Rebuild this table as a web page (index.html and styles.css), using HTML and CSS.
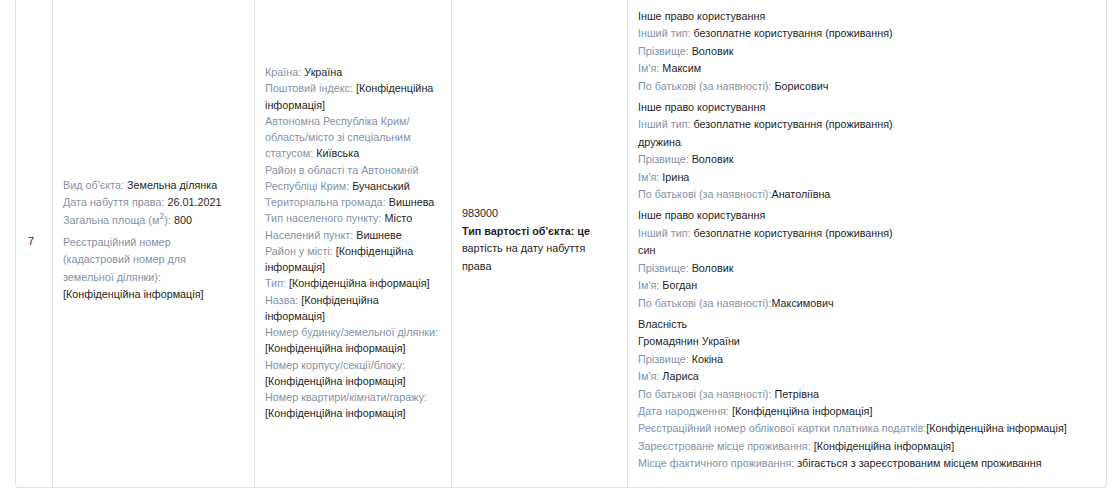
FILE: index.html
```html
<!DOCTYPE html>
<html lang="uk">
<head>
<meta charset="utf-8">
<title>Об'єкт</title>
<link rel="stylesheet" href="styles.css">
</head>
<body>
<div class="tbl">
  <div class="cell mid num">7</div>

  <div class="cell mid c2">
    <div class="grp">
      <div><span class="lbl">Вид об'єкта:</span> Земельна ділянка</div>
      <div><span class="lbl">Дата набуття права:</span> 26.01.2021</div>
      <div><span class="lbl">Загальна площа (м<sup>2</sup>):</span> 800</div>
    </div>
    <div class="grp">
      <div class="lbl narrow">Реєстраційний номер (кадастровий номер для земельної ділянки):</div>
      <div>[Конфіденційна інформація]</div>
    </div>
  </div>

  <div class="cell mid c3">
    <div><span class="lbl">Країна:</span> Україна</div>
    <div><span class="lbl">Поштовий індекс:</span> [Конфіденційна інформація]</div>
    <div><span class="lbl">Автономна Республіка Крим/ область/місто зі спеціальним статусом:</span> Київська</div>
    <div><span class="lbl">Район в області та Автономній Республіці Крим:</span> Бучанський</div>
    <div><span class="lbl">Територіальна громада:</span> Вишнева</div>
    <div><span class="lbl">Тип населеного пункту:</span> Місто</div>
    <div><span class="lbl">Населений пункт:</span> Вишневе</div>
    <div><span class="lbl">Район у місті:</span> [Конфіденційна інформація]</div>
    <div><span class="lbl">Тип:</span> [Конфіденційна інформація]</div>
    <div><span class="lbl">Назва:</span> [Конфіденційна інформація]</div>
    <div class="lbl">Номер будинку/земельної ділянки:</div>
    <div>[Конфіденційна інформація]</div>
    <div class="lbl">Номер корпусу/секції/блоку:</div>
    <div>[Конфіденційна інформація]</div>
    <div class="lbl">Номер квартири/кімнати/гаражу:</div>
    <div>[Конфіденційна інформація]</div>
  </div>

  <div class="cell mid c4">
    <div>983000</div>
    <div><b>Тип вартості об'єкта: це</b> вартість на дату набуття права</div>
  </div>

  <div class="cell c5">
    <div class="grp">
      <div>Інше право користування</div>
      <div><span class="lbl">Інший тип:</span> безоплатне користування (проживання)</div>
      <div><span class="lbl">Прізвище:</span> Воловик</div>
      <div><span class="lbl">Ім'я:</span> Максим</div>
      <div><span class="lbl">По батькові (за наявності):</span> Борисович</div>
    </div>
    <div class="grp">
      <div>Інше право користування</div>
      <div><span class="lbl">Інший тип:</span> безоплатне користування (проживання)</div>
      <div>дружина</div>
      <div><span class="lbl">Прізвище:</span> Воловик</div>
      <div><span class="lbl">Ім'я:</span> Ірина</div>
      <div><span class="lbl">По батькові (за наявності):</span>Анатоліївна</div>
    </div>
    <div class="grp">
      <div>Інше право користування</div>
      <div><span class="lbl">Інший тип:</span> безоплатне користування (проживання)</div>
      <div>син</div>
      <div><span class="lbl">Прізвище:</span> Воловик</div>
      <div><span class="lbl">Ім'я:</span> Богдан</div>
      <div><span class="lbl">По батькові (за наявності):</span>Максимович</div>
    </div>
    <div class="grp">
      <div>Власність</div>
      <div>Громадянин України</div>
      <div><span class="lbl">Прізвище:</span> Кокіна</div>
      <div><span class="lbl">Ім'я:</span> Лариса</div>
      <div><span class="lbl">По батькові (за наявності):</span> Петрівна</div>
      <div><span class="lbl">Дата народження:</span> [Конфіденційна інформація]</div>
      <div><span class="lbl">Реєстраційний номер облікової картки платника податків:</span>[Конфіденційна інформація]</div>
      <div><span class="lbl">Зареєстроване місце проживання:</span> [Конфіденційна інформація]</div>
      <div><span class="lbl">Місце фактичного проживання:</span> збігається з зареєстрованим місцем проживання</div>
    </div>
  </div>
</div>
</body>
</html>
```

FILE: styles.css
```css
html, body {
  margin: 0;
  padding: 0;
  background: #ffffff;
}
body {
  font-family: "Liberation Sans", Arial, sans-serif;
  font-size: 10.8px;
  line-height: 17.4px;
  color: #1f1f1f;
}
.tbl {
  margin-left: 15px;
  width: 1092px;
  box-sizing: border-box;
  display: grid;
  grid-template-columns: 36px 202px 197px 176px 479px;
  border: 1px solid #dfe1e6;
  border-top: none;
  border-radius: 0 0 4px 4px;
}
.cell {
  box-sizing: border-box;
  padding: 8px 10px 14px 10px;
  border-left: 1px solid #dfe1e6;
}
.cell.num {
  border-left: none;
  padding-left: 12px;
  padding-right: 4px;
  padding-top: 11px;
}
.mid {
  display: flex;
  flex-direction: column;
  justify-content: center;
}
.lbl {
  color: #8492a8;
}
.narrow {
  max-width: 150px;
}
.grp + .grp {
  margin-top: 4px;
}
.c2 .grp + .grp {
  margin-top: 5px;
}
.c3 {
  line-height: 16.25px;
  padding-top: 13px;
}
.c4 b {
  font-weight: bold;
}
sup {
  font-size: 9px;
  line-height: 0;
  vertical-align: 5px;
}
```
